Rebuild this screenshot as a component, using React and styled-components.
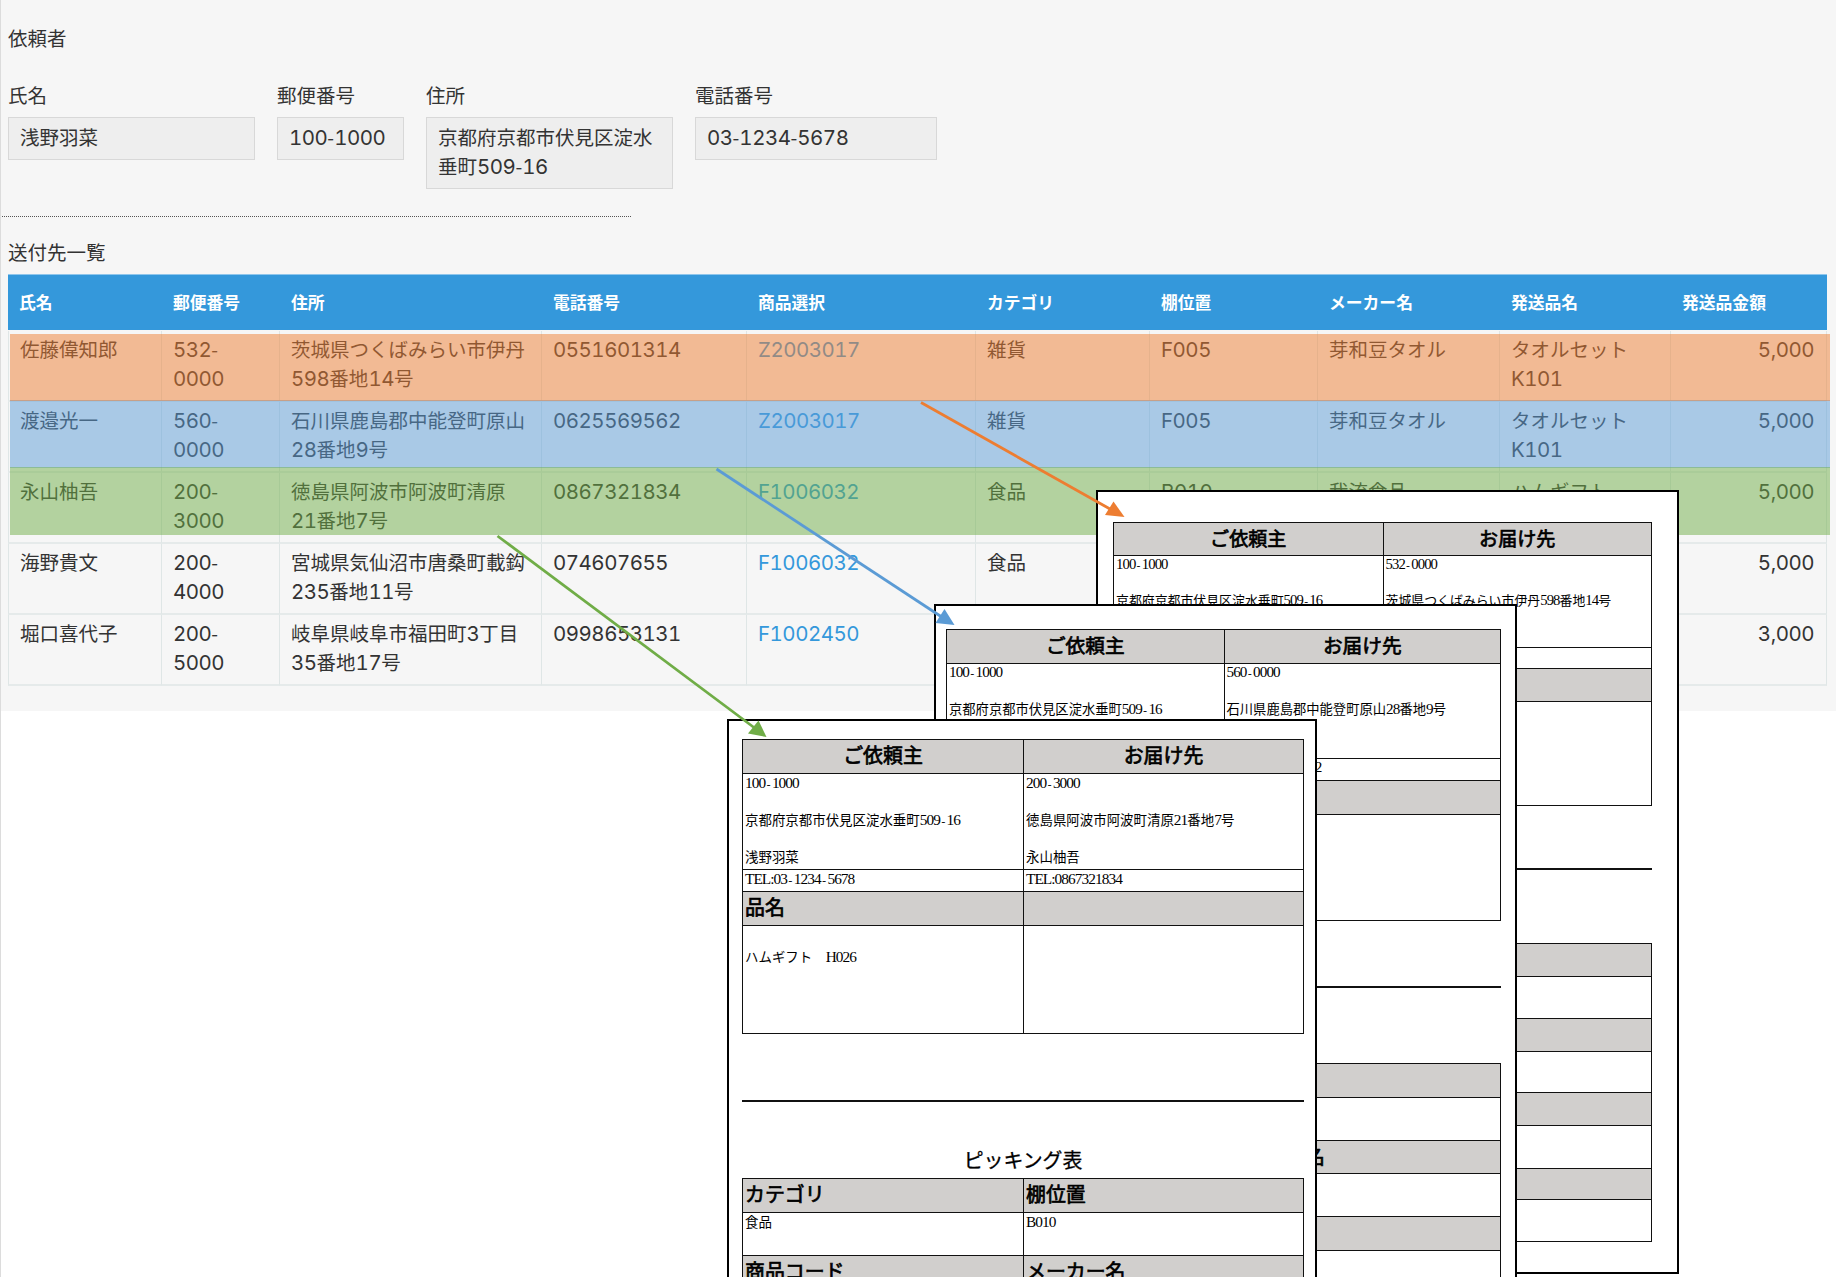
import React from 'react';
import styled, { createGlobalStyle } from 'styled-components';

const GlobalStyle = createGlobalStyle`
  * {
    box-sizing: border-box;
  }

  body {
    background-color: #fff;
    margin: 0;
    overflow: hidden;
  }
`;

const Page = styled.div`
  border-left: 1px solid #dcdcdc;
  color: #333;
  font-family: 'Noto Sans CJK JP', sans-serif;
  font-size: 19.5px;
  height: 1277px;
  line-height: 29px;
  overflow: hidden;
  position: relative;
  width: 1836px;
`;

const Panel = styled.div`
  background-color: #f6f6f6;
  height: 711px;
  padding: 23px 9px 0 7px;
`;

const SectionTitle = styled.div`
  height: 29px;
`;

const Fields = styled.div`
  align-items: flex-start;
  display: flex;
  gap: 22px;
  height: 136px;
  margin-top: 28px;
`;

const Field = styled.div`
  width: ${props => props.$width}px;
`;

const Label = styled.div`
  height: 37px;
`;

const Value = styled.div`
  background-color: #eee;
  border: 1px solid #d8d8d8;
  padding: 4px 0 8px 11px;
  white-space: nowrap;
`;

const Divider = styled.div`
  border-top: 1px dotted #555;
  height: 21px;
  margin-left: -6px;
  width: 629px;
`;

const Table = styled.div`
  margin-top: 8px;
  width: 1819px;
`;

const Row = styled.div`
  display: grid;
  grid-template-columns: 154px 118px 262px 205px 229px 174px 168px 182px 171px 156px;
`;

const HeadRow = styled(Row)`
  background-color: #3498db;
  border-top: 1px solid #8fc6ec;
  color: #fff;
  font-size: 16.8px;
  font-weight: 700;
  height: 56px;
  line-height: 55px;
  margin-bottom: 1px;
`;

const HeadCell = styled.div`
  padding-left: 11px;
`;

const Cell = styled.div`
  border-bottom: 2px solid #e5eaea;
  border-right: 1px solid #dfe6e6;
  color: ${props => (props.$link ? '#3498db' : 'inherit')};
  height: 71px;
  padding: 3px 12px 0 11px;
  text-align: ${props => (props.$right ? 'right' : 'left')};
  white-space: pre;

  &:first-child {
    border-left: 1px solid #dfe6e6;
  }
`;

const Latin = styled.span`
  font-family: Inter, sans-serif;
  font-size: 1.05em;
  font-variant-numeric: tabular-nums;
  letter-spacing: -0.024em;
  line-height: 1;
`;

const Dash = styled.span`
  letter-spacing: 0;
`;

const Band = styled.div`
  background-color: ${props => props.$color};
  height: ${props => props.$height}px;
  left: 9px;
  opacity: 0.5;
  position: absolute;
  top: ${props => props.$top}px;
  width: 1820px;
`;

const Slip = styled.div`
  background-color: #fff;
  border: 2px solid #000;
  color: #000;
  font-size: ${props => props.$font}px;
  height: ${props => props.$box[3]}px;
  left: ${props => props.$box[0]}px;
  line-height: ${props => props.$line}px;
  overflow: hidden;
  padding: ${props => props.$pad};
  position: absolute;
  top: ${props => props.$box[1]}px;
  width: ${props => props.$box[2]}px;
`;

const SlipTable = styled.div`
  border: 1px solid #111;
  border-bottom: 0;
`;

const SlipRow = styled.div`
  background-color: ${props => (props.$head ? '#d1cfcd' : '#fff')};
  border-bottom: 1px solid #111;
  display: grid;
  grid-template-columns: 1fr 1fr;
  height: ${props => props.$height}px;
`;

const SlipCell = styled.div`
  font-size: ${props => (props.$head ? '1.48em' : '1em')};
  line-height: ${props => (props.$head ? '29px' : 'inherit')};
  padding-left: ${props => (props.$center ? 0 : 2)}px;
  text-align: ${props => (props.$center ? 'center' : 'left')};
  white-space: pre;
  -webkit-text-stroke: ${props => (props.$head ? '0.7px #000' : '0')};

  & + & {
    border-left: 1px solid #111;
  }
`;

const SlipText = styled.div`
  margin-top: ${props => props.$shift}px;
`;

const SlipLatin = styled.span`
  font-family: 'Liberation Serif', serif;
  font-size: 1.14em;
  letter-spacing: -0.061em;
  line-height: 1;
`;

const SlipDash = styled.span`
  font-family: 'Liberation Mono', monospace;
  font-size: 0.83em;
  line-height: 1;
`;

const CutLine = styled.div`
  background-color: #111;
  height: 2px;
  margin-top: ${props => props.$gap}px;
`;

const SlipTitle = styled.div`
  align-items: flex-end;
  display: flex;
  font-size: 1.48em;
  height: ${props => props.$height}px;
  justify-content: center;
  line-height: 36px;
  -webkit-text-stroke: 0.3px #000;
`;

const Arrows = styled.svg`
  height: 1277px;
  left: -1px;
  position: absolute;
  top: 0;
  width: 1836px;
`;

const Text = ({ children, latin: L = Latin, dash: D = Dash }) =>
  children.split(/(-|[!-,.-~]+)/).map((part, i) => {
    if (part === '-') return <D key={i}>-</D>;
    return i % 2 ? <L key={i}>{part}</L> : part;
  });

const fields = [
  { label: '氏名', value: '浅野羽菜', width: 247 },
  { label: '郵便番号', value: '100-1000', width: 127 },
  { label: '住所', value: '京都府京都市伏見区淀水\n垂町509-16', width: 247 },
  { label: '電話番号', value: '03-1234-5678', width: 242 },
];

const heads = [
  '氏名', '郵便番号', '住所', '電話番号', '商品選択',
  'カテゴリ', '棚位置', 'メーカー名', '発送品名', '発送品金額',
];

const rows = [
  ['佐藤偉知郎', '532-\n0000', '茨城県つくばみらい市伊丹\n598番地14号', '0551601314', 'Z2003017', '雑貨', 'F005', '芽和豆タオル', 'タオルセット\nK101', '5,000'],
  ['渡邉光一', '560-\n0000', '石川県鹿島郡中能登町原山\n28番地9号', '0625569562', 'Z2003017', '雑貨', 'F005', '芽和豆タオル', 'タオルセット\nK101', '5,000'],
  ['永山柚吾', '200-\n3000', '徳島県阿波市阿波町清原\n21番地7号', '0867321834', 'F1006032', '食品', 'B010', '我流食品', 'ハムギフト', '5,000'],
  ['海野貴文', '200-\n4000', '宮城県気仙沼市唐桑町載鈎\n235番地11号', '074607655', 'F1006032', '食品', '', '', '', '5,000'],
  ['堀口喜代子', '200-\n5000', '岐阜県岐阜市福田町3丁目\n35番地17号', '0998653131', 'F1002450', '', '', '', '', '3,000'],
];

const slips = [
  {
    box: [1095, 490, 583, 784], pad: '30px 25px 0 15px', font: 12.9, line: 17.8,
    top: [33, 92, 21, 33, 104], gap: 62, title: 73,
    bottom: [33, 42, 33, 41, 33, 43, 31, 42],
    zip: '532-0000', address: '茨城県つくばみらい市伊丹598番地14号', name: '', tel: '',
    goods: 'タオルセット　K101', category: '雑貨', shelf: 'F005',
  },
  {
    box: [933, 604, 583, 760], pad: '23px 14px 0 10px', font: 13.3, line: 18.5,
    top: [34, 95, 22, 34, 106], gap: 65, title: 75,
    bottom: [34, 43, 33, 43, 34, 43],
    zip: '560-0000', address: '石川県鹿島郡中能登町原山28番地9号', name: '', tel: '0625569562',
    goods: 'タオルセット　K101', category: '雑貨', shelf: 'F005',
  },
  {
    box: [726, 719, 590, 760], pad: '18px 11px 0 13px', font: 13.45, line: 18.5,
    top: [34, 96, 22, 34, 108], gap: 66, title: 76,
    bottom: [34, 43, 34, 43],
    zip: '200-3000', address: '徳島県阿波市阿波町清原21番地7号', name: '永山柚吾', tel: '0867321834',
    goods: 'ハムギフト　H026', category: '食品', shelf: 'B010',
  },
];

const arrows = [
  { color: '#ed7d31', line: [921, 402.5, 1110, 509], head: '1124.5,517 1105,515 1113.5,501.5' },
  { color: '#5b9bd5', line: [716.5, 469, 941, 616.5], head: '954.5,625 935.5,623 944.5,609' },
  { color: '#70ad47', line: [497.5, 536, 754, 727.5], head: '766.5,737 748,733.5 758.5,720.5' },
];

const SlipLine = ({ height, head, center, shift, left, right }) => (
  <SlipRow $height={height} $head={head}>
    {[left, right].map((text, i) => (
      <SlipCell key={i} $head={head} $center={center}>
        <SlipText $shift={shift || (head ? 0 : -1)}>
          <Text latin={SlipLatin} dash={SlipDash}>{text || ''}</Text>
        </SlipText>
      </SlipCell>
    ))}
  </SlipRow>
);

const ShippingSlip = ({ slip }) => {
  const [h1, h2, h3, h4, h5] = slip.top;
  const picking = [
    ['カテゴリ', '棚位置'],
    [slip.category, slip.shelf],
    ['商品コード', 'メーカー名'],
  ];

  return (
    <Slip $box={slip.box} $pad={slip.pad} $font={slip.font} $line={slip.line}>
      <SlipTable>
        <SlipLine height={h1} head center left="ご依頼主" right="お届け先" />
        <SlipLine
          height={h2}
          left={`100-1000\n\n京都府京都市伏見区淀水垂町509-16${slip.name && '\n\n浅野羽菜'}`}
          right={`${slip.zip}\n\n${slip.address}${slip.name && `\n\n${slip.name}`}`}
        />
        <SlipLine height={h3} left="TEL:03-1234-5678" right={slip.tel && `TEL:${slip.tel}`} />
        <SlipLine height={h4} head left="品名" />
        <SlipLine height={h5} shift={2} left={`\n${slip.goods}`} />
      </SlipTable>
      <CutLine $gap={slip.gap} />
      <SlipTitle $height={slip.title}>ピッキング表</SlipTitle>
      <SlipTable>
        {slip.bottom.map((height, i) => (
          <SlipLine
            key={i}
            height={height}
            head={i % 2 === 0}
            left={picking[i] && picking[i][0]}
            right={picking[i] && picking[i][1]}
          />
        ))}
      </SlipTable>
    </Slip>
  );
};

export default () => (
  <Page>
    <GlobalStyle />
    <Panel>
      <SectionTitle>依頼者</SectionTitle>
      <Fields>
        {fields.map(field => (
          <Field key={field.label} $width={field.width}>
            <Label>{field.label}</Label>
            <Value>
              {field.value.split('\n').map(line => (
                <div key={line}><Text>{line}</Text></div>
              ))}
            </Value>
          </Field>
        ))}
      </Fields>
      <Divider />
      <SectionTitle>送付先一覧</SectionTitle>
      <Table>
        <HeadRow>
          {heads.map(head => <HeadCell key={head}>{head}</HeadCell>)}
        </HeadRow>
        {rows.map(row => (
          <Row key={row[0]}>
            {row.map((text, i) => (
              <Cell key={i} $link={i === 4} $right={i === 9}>
                <Text>{text}</Text>
              </Cell>
            ))}
          </Row>
        ))}
      </Table>
    </Panel>
    <Band $color="#5b9bd5" $top={400} $height={68} />
    <Band $color="#ed7d31" $top={334} $height={67} />
    <Band $color="#70ad47" $top={467} $height={68} />
    {slips.map(slip => <ShippingSlip key={slip.zip} slip={slip} />)}
    <Arrows viewBox="0 0 1836 1277">
      {arrows.map(arrow => (
        <g key={arrow.color} fill={arrow.color} stroke={arrow.color}>
          <line
            x1={arrow.line[0]}
            y1={arrow.line[1]}
            x2={arrow.line[2]}
            y2={arrow.line[3]}
            strokeWidth="2.8"
          />
          <polygon points={arrow.head} stroke="none" />
        </g>
      ))}
    </Arrows>
  </Page>
);
